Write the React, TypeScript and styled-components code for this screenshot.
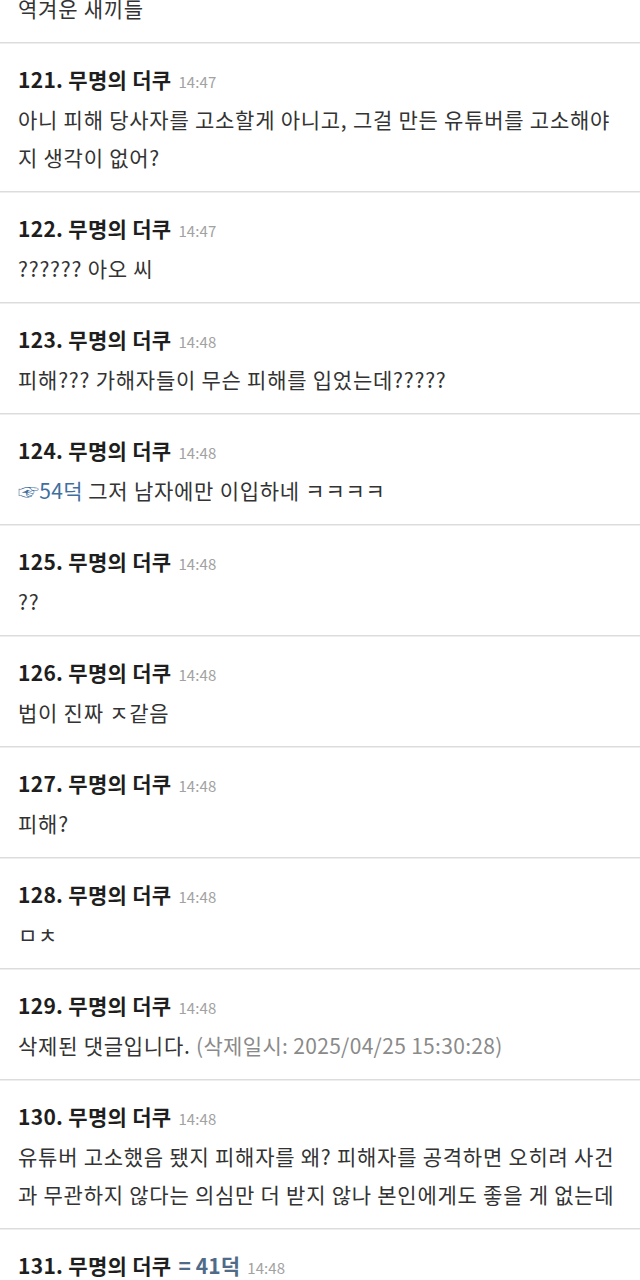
import React from "react";
import styled, { createGlobalStyle } from "styled-components";

const Global = createGlobalStyle`
  html, body { margin: 0; padding: 0; background: #fff; }
  body { font-family: "Noto Sans CJK KR", "Noto Sans", sans-serif; overflow: hidden; }
`;

const List = styled.main`
  display: flex;
  flex-direction: column;
  margin-top: -68px;
  background: #fff;
`;

const Comment = styled.article`
  display: flex;
  flex-direction: column;
  gap: 7px;
  padding: 22px 18px 15px;
  border-bottom: 1px solid #dcdcdc;
  box-shadow: 0 1px 0 #eeeeee;
`;

const Header = styled.div`
  display: flex;
  align-items: baseline;
  gap: 7px;
  height: 28px;
  line-height: 28px;
  white-space: nowrap;
`;

const Name = styled.span`
  font-size: 21px;
  font-weight: 700;
  color: #1e1e1e;
  letter-spacing: 0.3px;
`;

const Tag = styled.span`
  font-size: 21px;
  font-weight: 700;
  color: #4f6b87;
  letter-spacing: 0.1px;
`;

const Time = styled.span`
  font-size: 15px;
  color: #a2a2a2;
  letter-spacing: 0.1px;
`;

const Body = styled.p`
  margin: 0;
  font-size: 21px;
  line-height: 38px;
  color: #333;
  letter-spacing: 0.75px;
  word-break: normal;
`;

const Quote = styled.span`
  color: #3f6f9e;
  letter-spacing: 0.3px;
`;

const Deleted = styled.span`
  color: #8a8a8a;
  letter-spacing: 0.32px;
`;

type Item = {
  n: number;
  time: string;
  tag?: string;
  body: React.ReactNode;
};

const items: Item[] = [
  { n: 120, time: "14:47", body: "역겨운 새끼들" },
  {
    n: 121,
    time: "14:47",
    body: "아니 피해 당사자를 고소할게 아니고, 그걸 만든 유튜버를 고소해야지 생각이 없어?",
  },
  { n: 122, time: "14:47", body: "?????? 아오 씨" },
  { n: 123, time: "14:48", body: "피해??? 가해자들이 무슨 피해를 입었는데?????" },
  {
    n: 124,
    time: "14:48",
    body: (
      <>
        <Quote>☞54덕</Quote> 그저 남자에만 이입하네 ㅋㅋㅋㅋ
      </>
    ),
  },
  { n: 125, time: "14:48", body: "??" },
  { n: 126, time: "14:48", body: "법이 진짜 ㅈ같음" },
  { n: 127, time: "14:48", body: "피해?" },
  { n: 128, time: "14:48", body: "ㅁㅊ" },
  {
    n: 129,
    time: "14:48",
    body: (
      <>
        삭제된 댓글입니다. <Deleted>(삭제일시: 2025/04/25 15:30:28)</Deleted>
      </>
    ),
  },
  {
    n: 130,
    time: "14:48",
    body: "유튜버 고소했음 됐지 피해자를 왜? 피해자를 공격하면 오히려 사건과 무관하지 않다는 의심만 더 받지 않나 본인에게도 좋을 게 없는데",
  },
  { n: 131, time: "14:48", tag: "= 41덕", body: "" },
];

export default function App() {
  return (
    <>
      <Global />
      <List>
        {items.map((it) => (
          <Comment key={it.n}>
            <Header>
              <Name>{it.n}. 무명의 더쿠</Name>
              {it.tag && <Tag>{it.tag}</Tag>}
              <Time>{it.time}</Time>
            </Header>
            <Body>{it.body || "\u00a0"}</Body>
          </Comment>
        ))}
      </List>
    </>
  );
}
